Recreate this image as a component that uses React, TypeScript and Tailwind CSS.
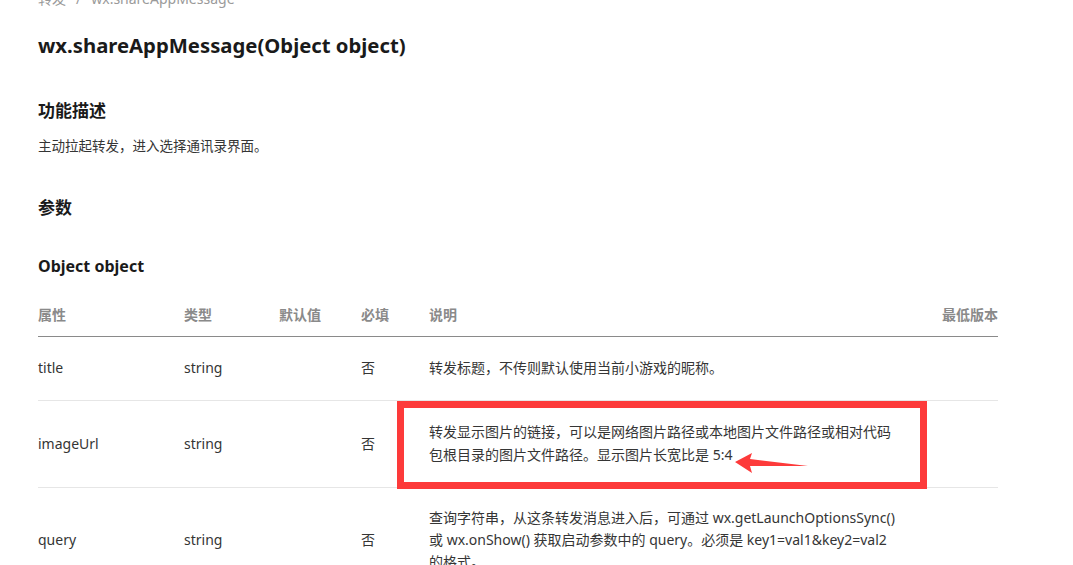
const FONT = "font-['Noto_Sans','Noto_Sans_CJK_SC',sans-serif]"

interface Row {
  name: string
  type: string
  def: string
  required: string
  desc: string[]
  version: string
}

const ROWS: Row[] = [
  { name: 'title', type: 'string', def: '', required: '否', desc: ['转发标题，不传则默认使用当前小游戏的昵称。'], version: '' },
  {
    name: 'imageUrl',
    type: 'string',
    def: '',
    required: '否',
    desc: ['转发显示图片的链接，可以是网络图片路径或本地图片文件路径或相对代码', '包根目录的图片文件路径。显示图片长宽比是 5:4'],
    version: '',
  },
  {
    name: 'query',
    type: 'string',
    def: '',
    required: '否',
    desc: [
      '查询字符串，从这条转发消息进入后，可通过 wx.getLaunchOptionsSync()',
      '或 wx.onShow() 获取启动参数中的 query。必须是 key1=val1&key2=val2',
      '的格式。',
    ],
    version: '',
  },
]

const GRID = 'grid grid-cols-[146px_95px_82px_68px_1fr_68px]'

function Annotation() {
  return (
    <>
      <div className="pointer-events-none absolute left-[359px] top-0 h-[88px] w-[530px] border-[7px] border-[#fd3a3a]" />
      <svg className="pointer-events-none absolute left-[695px] top-[50px]" width="80" height="26" viewBox="0 0 80 26">
        <polygon points="2,11 19,2 17,8 75,15 17,15 19,22" fill="#fd3a3a" />
      </svg>
    </>
  )
}

export default function App() {
  return (
    <div className={`h-[565px] w-[1073px] overflow-hidden bg-white ${FONT}`}>
      <div className="w-[960px] pl-[38px] box-content">
        <div className="-mt-[11px] h-[20px] text-[14px] leading-[20px] text-[#9a9a9a]">
          转发<span className="mx-[10px]">/</span>wx.shareAppMessage
        </div>

        <h1 className="mt-[20px] text-[20.3px] font-bold leading-[32px] text-[#1a1a1a]">
          wx.shareAppMessage(Object object)
        </h1>

        <h2 className="mt-[36px] text-[17px] font-bold leading-[28px] text-[#1a1a1a]">功能描述</h2>
        <p className="mt-[10px] text-[13.5px] leading-[22px] text-[#353535]">主动拉起转发，进入选择通讯录界面。</p>

        <h2 className="mt-[37px] text-[17px] font-bold leading-[28px] text-[#1a1a1a]">参数</h2>
        <h3 className="mt-[31px] text-[16px] font-bold leading-[26px] text-[#1a1a1a]">Object object</h3>

        <div className="mt-[15px] text-[14px]">
          <div className={`${GRID} h-[43px] items-center border-b border-[#8a8a8a] pb-[2px] font-semibold text-[#8a8a8a]`}>
            <div>属性</div>
            <div>类型</div>
            <div>默认值</div>
            <div>必填</div>
            <div>说明</div>
            <div className="text-right">最低版本</div>
          </div>

          {ROWS.map((row, i) => (
            <div
              key={row.name}
              className={`${GRID} relative items-center border-b border-[#e6e6e6] text-[#353535] ${
                i === 0
                  ? 'h-[64px] pb-[2px] leading-[22px]'
                  : i === 1
                    ? 'h-[87px] pb-[2px] leading-[23px]'
                    : 'py-[19px] leading-[22px]'
              }`}
            >
              <div>{row.name}</div>
              <div>{row.type}</div>
              <div>{row.def}</div>
              <div>{row.required}</div>
              <div>
                {row.desc.map((line) => (
                  <div key={line} className="whitespace-nowrap">
                    {line}
                  </div>
                ))}
              </div>
              <div className="text-right">{row.version}</div>
              {i === 1 && <Annotation />}
            </div>
          ))}
        </div>
      </div>
    </div>
  )
}
